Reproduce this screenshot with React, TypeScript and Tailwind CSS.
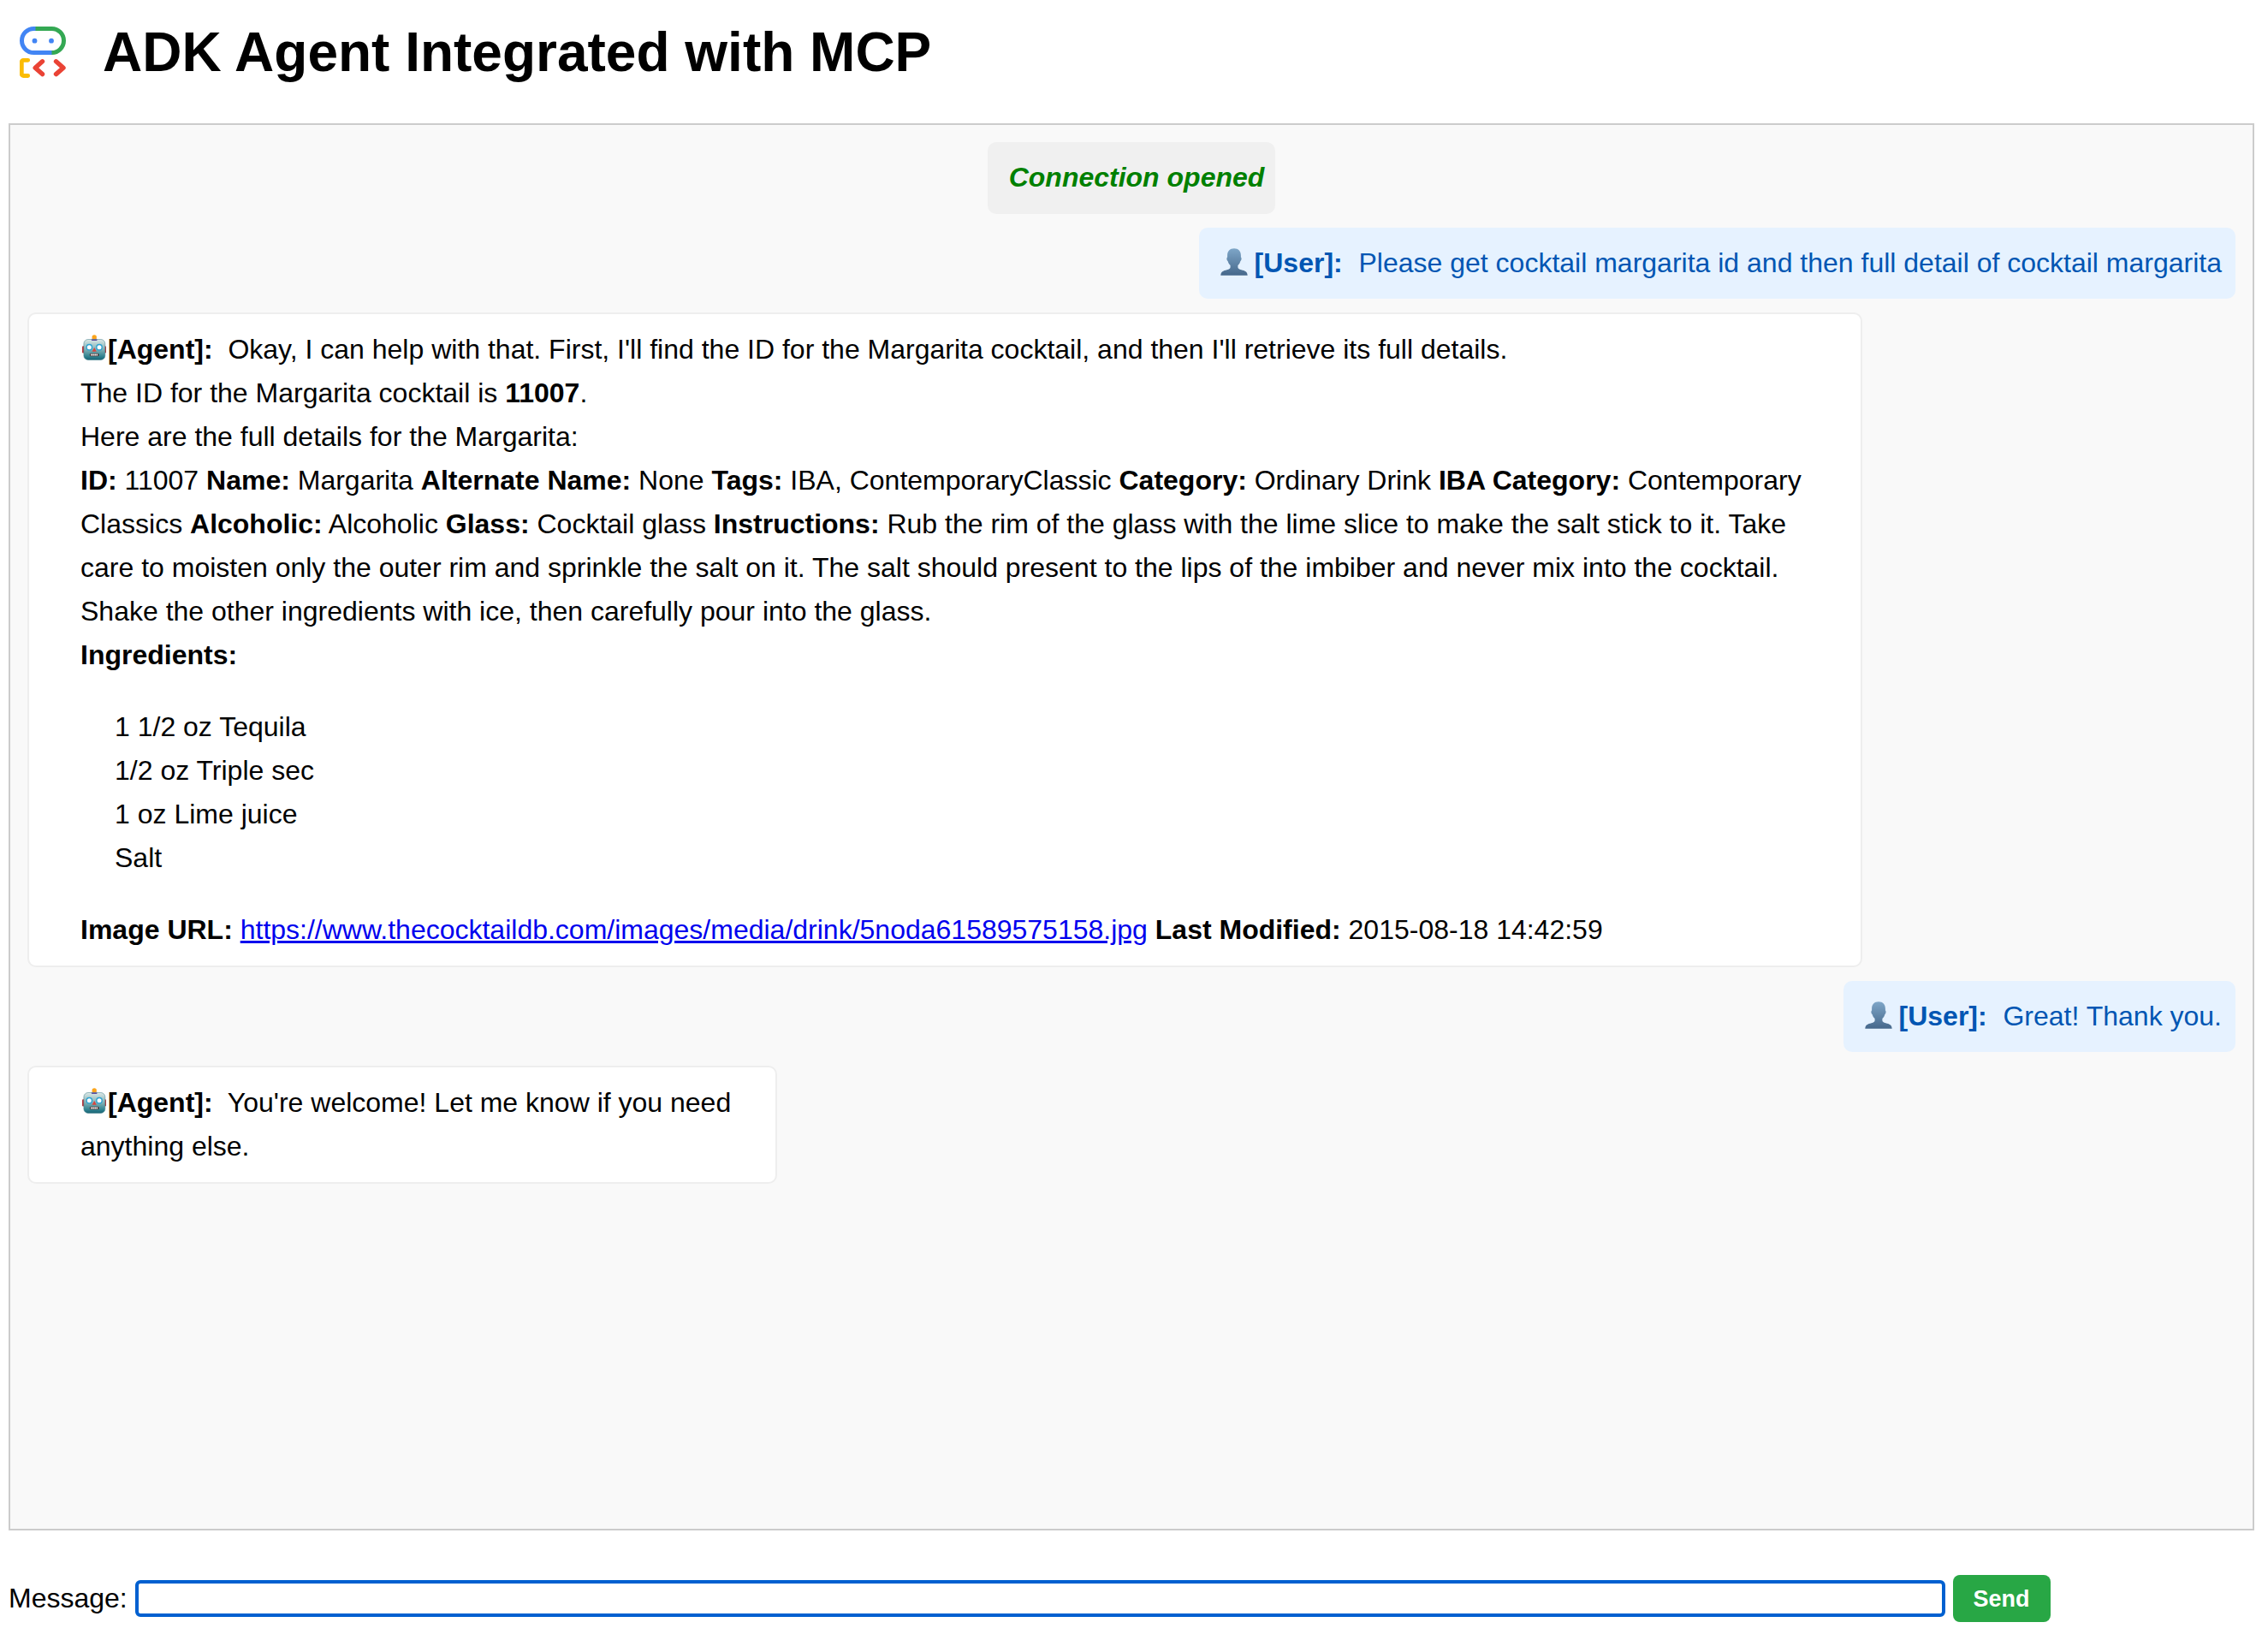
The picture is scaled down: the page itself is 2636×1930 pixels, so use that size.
import React from "react";

function AgentLogo() {
  return (
    <svg aria-hidden="true" viewBox="23 31 54 60" className="h-[60px] w-[54px] shrink-0" fill="none" strokeWidth="5">
      <path d="M42 33.5H39.5a14 14 0 0 0 0 28H61" stroke="#4285f4" />
      <path d="M41.5 33.5H60.500a14 14 0 0 1 0 28" stroke="#34a853" />
      <circle cx="40.500" cy="47.700" r="2.900" fill="#4285f4" />
      <circle cx="60" cy="47.700" r="2.900" fill="#4285f4" />
      <path d="M32.700 70.300H27.300a2 2 0 0 0-2 2V86.500a2 2 0 0 0 2 2H32.700" stroke="#fbbc04" strokeWidth="4.800" strokeLinecap="round" />
      <path d="M49.500 71.800L41.200 79.200L49.500 86.600M65.500 71.800L74 79.200L65.500 86.600" stroke="#ea4335" strokeWidth="5.400" strokeLinecap="round" strokeLinejoin="round" />
    </svg>
  );
}

function UserIcon() {
  return (
    <svg aria-hidden="true" viewBox="0 0 32 32" className="mr-2 inline-block size-8 align-[-4px]">
      <defs>
        <linearGradient id="bust" x1="0" y1="0" x2="0" y2="1">
          <stop offset="0" stopColor="#7ea6c8" />
          <stop offset="1" stopColor="#46688b" />
        </linearGradient>
      </defs>
      <path
        fill="url(#bust)"
        d="M16 .3c5 0 8 3.300 7.900 8.200v2c1 .2 1 3.600-.5 4.400-.6 2.300-1.700 3.800-3 5v2.300c0 1.600 1.500 2.400 4 3 4.500 1 7 2.300 7.300 6.500H.3c.3-4.200 2.800-5.500 7.300-6.500 2.500-.6 4-1.400 4-3v-2.300c-1.300-1.200-2.400-2.700-3-5-1.500-.8-1.500-4.200-.5-4.400v-2C8 3.600 11 .3 16 .3z"
      />
    </svg>
  );
}

function RobotIcon() {
  return (
    <svg aria-hidden="true" viewBox="0 0 32 32" className="inline-block size-8 align-[-4px]">
      <defs>
        <linearGradient id="face" x1="0" y1="0" x2="0" y2="1">
          <stop offset="0" stopColor="#dce8e6" />
          <stop offset=".5" stopColor="#7fb0b5" />
          <stop offset=".85" stopColor="#2b7f8d" />
          <stop offset="1" stopColor="#1a6373" />
        </linearGradient>
      </defs>
      <rect x="2" y="13.300" width="28" height="8.200" rx="1.200" fill="#b8373d" />
      <path d="M12.500 6.500c0-1.800 1.500-2.300 3.700-2.300s3.700.5 3.700 2.300z" fill="#5b4a9c" />
      <circle cx="16.200" cy="2.900" r="2.700" fill="#fba51c" />
      <rect x="3.900" y="5.500" width="24.900" height="24" rx="5" fill="url(#face)" stroke="#3f7d88" strokeWidth=".5" />
      <path d="M12.700 7c.4-1.300 1.500-1.500 3.500-1.500s3.100.2 3.500 1.500z" fill="#5b4a9c" />
      <circle cx="10.300" cy="14.700" r="3.200" fill="#fff" stroke="#2fa3d2" strokeWidth="1.400" />
      <circle cx="22" cy="14.700" r="3.200" fill="#fff" stroke="#2fa3d2" strokeWidth="1.400" />
      <path d="M16.200 15l2.600 4.700h-5.200z" fill="#d9453d" />
      <rect x="10.800" y="21.700" width="10.800" height="3.500" rx="1.500" fill="#4b3a3a" />
      <path d="M12.200 23.400h8" stroke="#fff" strokeWidth="2" strokeDasharray="1.500 .6" />
    </svg>
  );
}

function UserMessage({ children }: { children: React.ReactNode }) {
  return (
    <div className="self-end rounded-[10px] bg-[#e6f2ff] py-4 pr-4 pl-[25px] text-[#0056b3]">
      <UserIcon />
      <b className="mr-px">[User]:</b>&nbsp; {children}
    </div>
  );
}

function AgentMessage({ className, children }: { className: string; children: React.ReactNode }) {
  return (
    <div className={`self-start rounded-[10px] border-2 border-[#eeeeee] bg-white py-4 pl-[60px] ${className}`}>
      <RobotIcon />
      <b>[Agent]:</b>&nbsp; {children}
    </div>
  );
}

const details: [string, string][] = [
  ["ID:", "11007"],
  ["Name:", "Margarita"],
  ["Alternate Name:", "None"],
  ["Tags:", "IBA, ContemporaryClassic"],
  ["Category:", "Ordinary Drink"],
  ["IBA Category:", "Contemporary Classics"],
  ["Alcoholic:", "Alcoholic"],
  ["Glass:", "Cocktail glass"],
  [
    "Instructions:",
    "Rub the rim of the glass with the lime slice to make the salt stick to it. Take care to moisten only the outer rim and sprinkle the salt on it. The salt should present to the lips of the imbiber and never mix into the cocktail. Shake the other ingredients with ice, then carefully pour into the glass.",
  ],
];

const ingredients = ["1 1/2 oz Tequila", "1/2 oz Triple sec", "1 oz Lime juice", "Salt"];

export default function App() {
  return (
    <div className="flex min-h-screen flex-col bg-white pl-[10px] font-['Liberation_Sans',Arial,sans-serif] text-[32px] leading-[51px] text-black">
      <header className="flex h-36 items-center gap-[43px] pb-[22px] pl-[13px]">
        <AgentLogo />
        <h1 className="text-[64px] leading-[74px] font-bold">ADK Agent Integrated with MCP</h1>
      </header>

      <main className="mr-[2px] flex flex-1 flex-col gap-4 border-2 border-[#cccccc] bg-[#f9f9f9] p-5">
        <div className="self-center rounded-[10px] bg-[#f0f0f0] pt-4 pr-[13px] pb-[17px] pl-[25px] font-bold text-[#008000] italic">
          Connection opened
        </div>

        <UserMessage>Please get cocktail margarita id and then full detail of cocktail margarita</UserMessage>

        <AgentMessage className="w-full max-w-[2144px] pr-[60px]">
          Okay, I can help with that. First, I'll find the ID for the Margarita cocktail, and then I'll retrieve its full details.
          <p>
            The ID for the Margarita cocktail is <b>11007</b>.
          </p>
          <p>Here are the full details for the Margarita:</p>
          <p>
            {details.map(([label, value]) => (
              <React.Fragment key={label}>
                <b>{label}</b> {value}{" "}
              </React.Fragment>
            ))}
          </p>
          <p>
            <b>Ingredients:</b>
          </p>
          <ul className="my-[33px] pl-10">
            {ingredients.map((item) => (
              <li key={item}>{item}</li>
            ))}
          </ul>
          <p>
            <b>Image URL:</b>{" "}
            <a href="https://www.thecocktaildb.com/images/media/drink/5noda61589575158.jpg" className="text-[#0000ee] underline">
              https://www.thecocktaildb.com/images/media/drink/5noda61589575158.jpg
            </a>{" "}
            <b>Last Modified:</b> 2015-08-18 14:42:59
          </p>
        </AgentMessage>

        <UserMessage>Great! Thank you.</UserMessage>

        <AgentMessage className="max-w-[876px] pr-10">You're welcome! Let me know if you need anything else.</AgentMessage>
      </main>

      <form className="flex h-[142px] items-center pt-[17px]" onSubmit={(e) => e.preventDefault()}>
        <label htmlFor="message" className="mr-[9px]">
          Message:
        </label>
        <input
          id="message"
          type="text"
          autoComplete="off"
          className="h-[43px] w-[calc(80%+14px)] rounded-[6px] border-4 border-[#0060d0] bg-white px-1 outline-none"
        />
        <button type="submit" className="ml-[9px] h-[55px] rounded-lg bg-[#28a745] px-6 text-[27px] leading-[30px] font-bold text-white">
          Send
        </button>
      </form>
    </div>
  );
}
